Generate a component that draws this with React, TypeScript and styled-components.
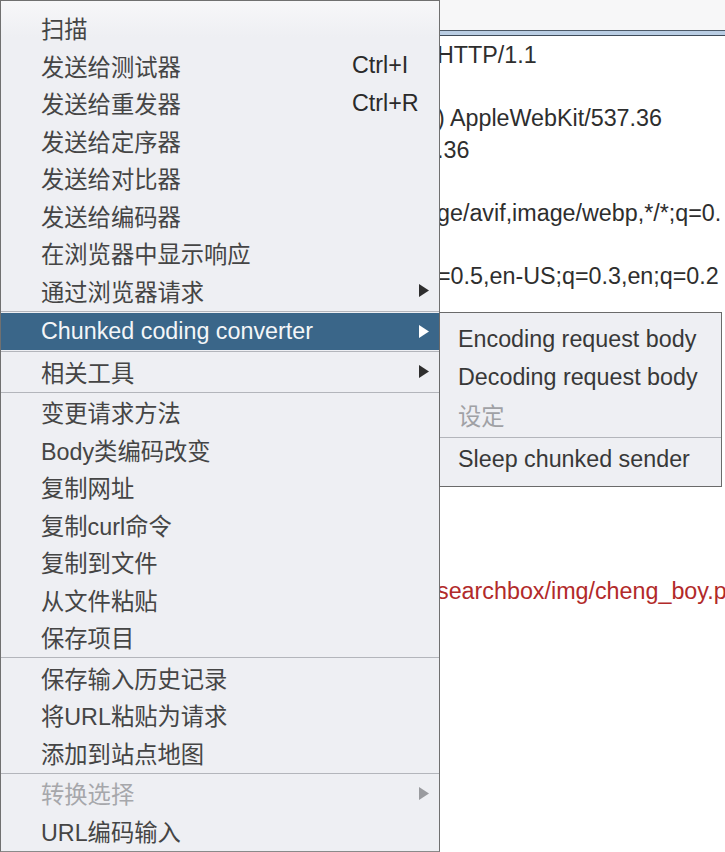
import { FC } from "react";
import styled, { createGlobalStyle } from "styled-components";

const Global = createGlobalStyle`
   html, body { margin: 0; padding: 0; background: #ffffff; overflow: hidden; }
   body { font-family: "Liberation Sans", "Noto Sans CJK SC", sans-serif; }
`

const Page = styled.div`
   position: relative;
   width: 725px;
   height: 852px;
   overflow: hidden;
   background: #ffffff;
`

const Editor = styled.div`
   display: flex;
   flex-direction: column;
   height: 100%;
`

const TabStrip = styled.div`
   height: 30px;
   background: #f7f7f8;
`

const Rule = styled.div`
   height: 4px;
   background: #b9cde3;
   border-top: 1px solid #4b5866;
   border-bottom: 1px solid #3e4b59;
`

const TextArea = styled.div`
   flex: 1;
   padding: 4px 0 0 437px;
   font-size: 23.3px;
   color: #2e2e2e;
   white-space: pre;
   overflow: hidden;
`

const Line = styled.div<{ $red?: boolean }>`
   height: 31.5px;
   line-height: 31.5px;
   color: ${({ $red }) => ($red ? "#b22a2a" : "#2e2e2e")};
`

const Menu = styled.div`
   position: absolute;
   left: 0;
   top: 0;
   width: 440px;
   height: 852px;
   box-sizing: border-box;
   border: 1px solid #707070;
   border-bottom-color: #8a8a8a;
   background: linear-gradient(#f7f7f9, #eeeff3 36px);
   padding-top: 8.5px;
   display: flex;
   flex-direction: column;
   font-size: 23.3px;
`

const Item = styled.div<{ $active?: boolean; $disabled?: boolean }>`
   height: 37.5px;
   flex: none;
   display: grid;
   grid-template-columns: 311px 1fr 30px;
   align-items: center;
   padding-left: 40px;
   white-space: nowrap;
   background: ${({ $active }) => ($active ? "#3a6689" : "transparent")};
   color: ${({ $active, $disabled }) =>
      $active ? "#f4f6f8" : $disabled ? "#a6a7ab" : "#454545"};
`

const Shortcut = styled.span`
   color: #2a2a2a;
`

const Arrow = styled.svg`
   width: 10px;
   height: 13px;
   justify-self: center;
`

const Divider = styled.div<{ $h: number }>`
   height: ${({ $h }) => $h}px;
   flex: none;
   display: flex;
   align-items: center;
   &::before {
      content: "";
      flex: 1;
      height: 1px;
      background: #b3b5bb;
   }
`

const SubMenu = styled.div`
   position: absolute;
   left: 439px;
   top: 312px;
   width: 283px;
   height: 175px;
   box-sizing: border-box;
   border: 1px solid #6a6a6a;
   background: #eeeff3;
   padding-top: 8px;
   display: flex;
   flex-direction: column;
   font-size: 23.3px;
`

const SubItem = styled.div<{ $disabled?: boolean }>`
   height: 37.5px;
   flex: none;
   display: flex;
   align-items: center;
   padding-left: 18px;
   white-space: nowrap;
   color: ${({ $disabled }) => ($disabled ? "#a0a1a5" : "#383838")};
`

type Entry =
   | { sep: number }
   | { label: string; shortcut?: string; sub?: boolean; active?: boolean; disabled?: boolean }

const entries: Entry[] = [
   { label: "扫描" },
   { label: "发送给测试器", shortcut: "Ctrl+I" },
   { label: "发送给重发器", shortcut: "Ctrl+R" },
   { label: "发送给定序器" },
   { label: "发送给对比器" },
   { label: "发送给编码器" },
   { label: "在浏览器中显示响应" },
   { label: "通过浏览器请求", sub: true },
   { sep: 3 },
   { label: "Chunked coding converter", sub: true, active: true },
   { sep: 3 },
   { label: "相关工具", sub: true },
   { sep: 3 },
   { label: "变更请求方法" },
   { label: "Body类编码改变" },
   { label: "复制网址" },
   { label: "复制curl命令" },
   { label: "复制到文件" },
   { label: "从文件粘贴" },
   { label: "保存项目" },
   { sep: 3 },
   { label: "保存输入历史记录" },
   { label: "将URL粘贴为请求" },
   { label: "添加到站点地图" },
   { sep: 3 },
   { label: "转换选择", sub: true, disabled: true },
   { label: "URL编码输入" },
]

const lines: { text: string; red?: boolean }[] = [
   { text: "HTTP/1.1" },
   { text: " " },
   { text: ") AppleWebKit/537.36" },
   { text: ".36" },
   { text: " " },
   { text: "ge/avif,image/webp,*/*;q=0." },
   { text: " " },
   { text: "=0.5,en-US;q=0.3,en;q=0.2" },
   { text: " " },
   { text: " " },
   { text: " " },
   { text: " " },
   { text: " " },
   { text: " " },
   { text: " " },
   { text: " " },
   { text: " " },
   { text: "searchbox/img/cheng_boy.p", red: true },
]

const ArrowIcon: FC<{ color: string }> = ({ color }) => (
   <Arrow viewBox="0 0 10 13">
      <polygon points="0,0 10,6.5 0,13" fill={color} />
   </Arrow>
)

export default function App() {
   return (
      <Page>
         <Global />
         <Editor>
            <TabStrip />
            <Rule />
            <TextArea>
               {lines.map((l, i) => (
                  <Line key={i} $red={l.red}>{l.text}</Line>
               ))}
            </TextArea>
         </Editor>

         <Menu>
            {entries.map((e, i) =>
               "sep" in e ? (
                  <Divider key={i} $h={e.sep} />
               ) : (
                  <Item key={i} $active={e.active} $disabled={e.disabled}>
                     <span>{e.label}</span>
                     <Shortcut>{e.shortcut ?? ""}</Shortcut>
                     {e.sub ? (
                        <ArrowIcon color={e.active ? "#ffffff" : e.disabled ? "#9a9b9f" : "#2e2e2e"} />
                     ) : <span />}
                  </Item>
               )
            )}
         </Menu>

         <SubMenu>
            <SubItem>Encoding request body</SubItem>
            <SubItem>Decoding request body</SubItem>
            <SubItem $disabled>设定</SubItem>
            <Divider $h={7} />
            <SubItem>Sleep chunked sender</SubItem>
         </SubMenu>
      </Page>
   )
}
